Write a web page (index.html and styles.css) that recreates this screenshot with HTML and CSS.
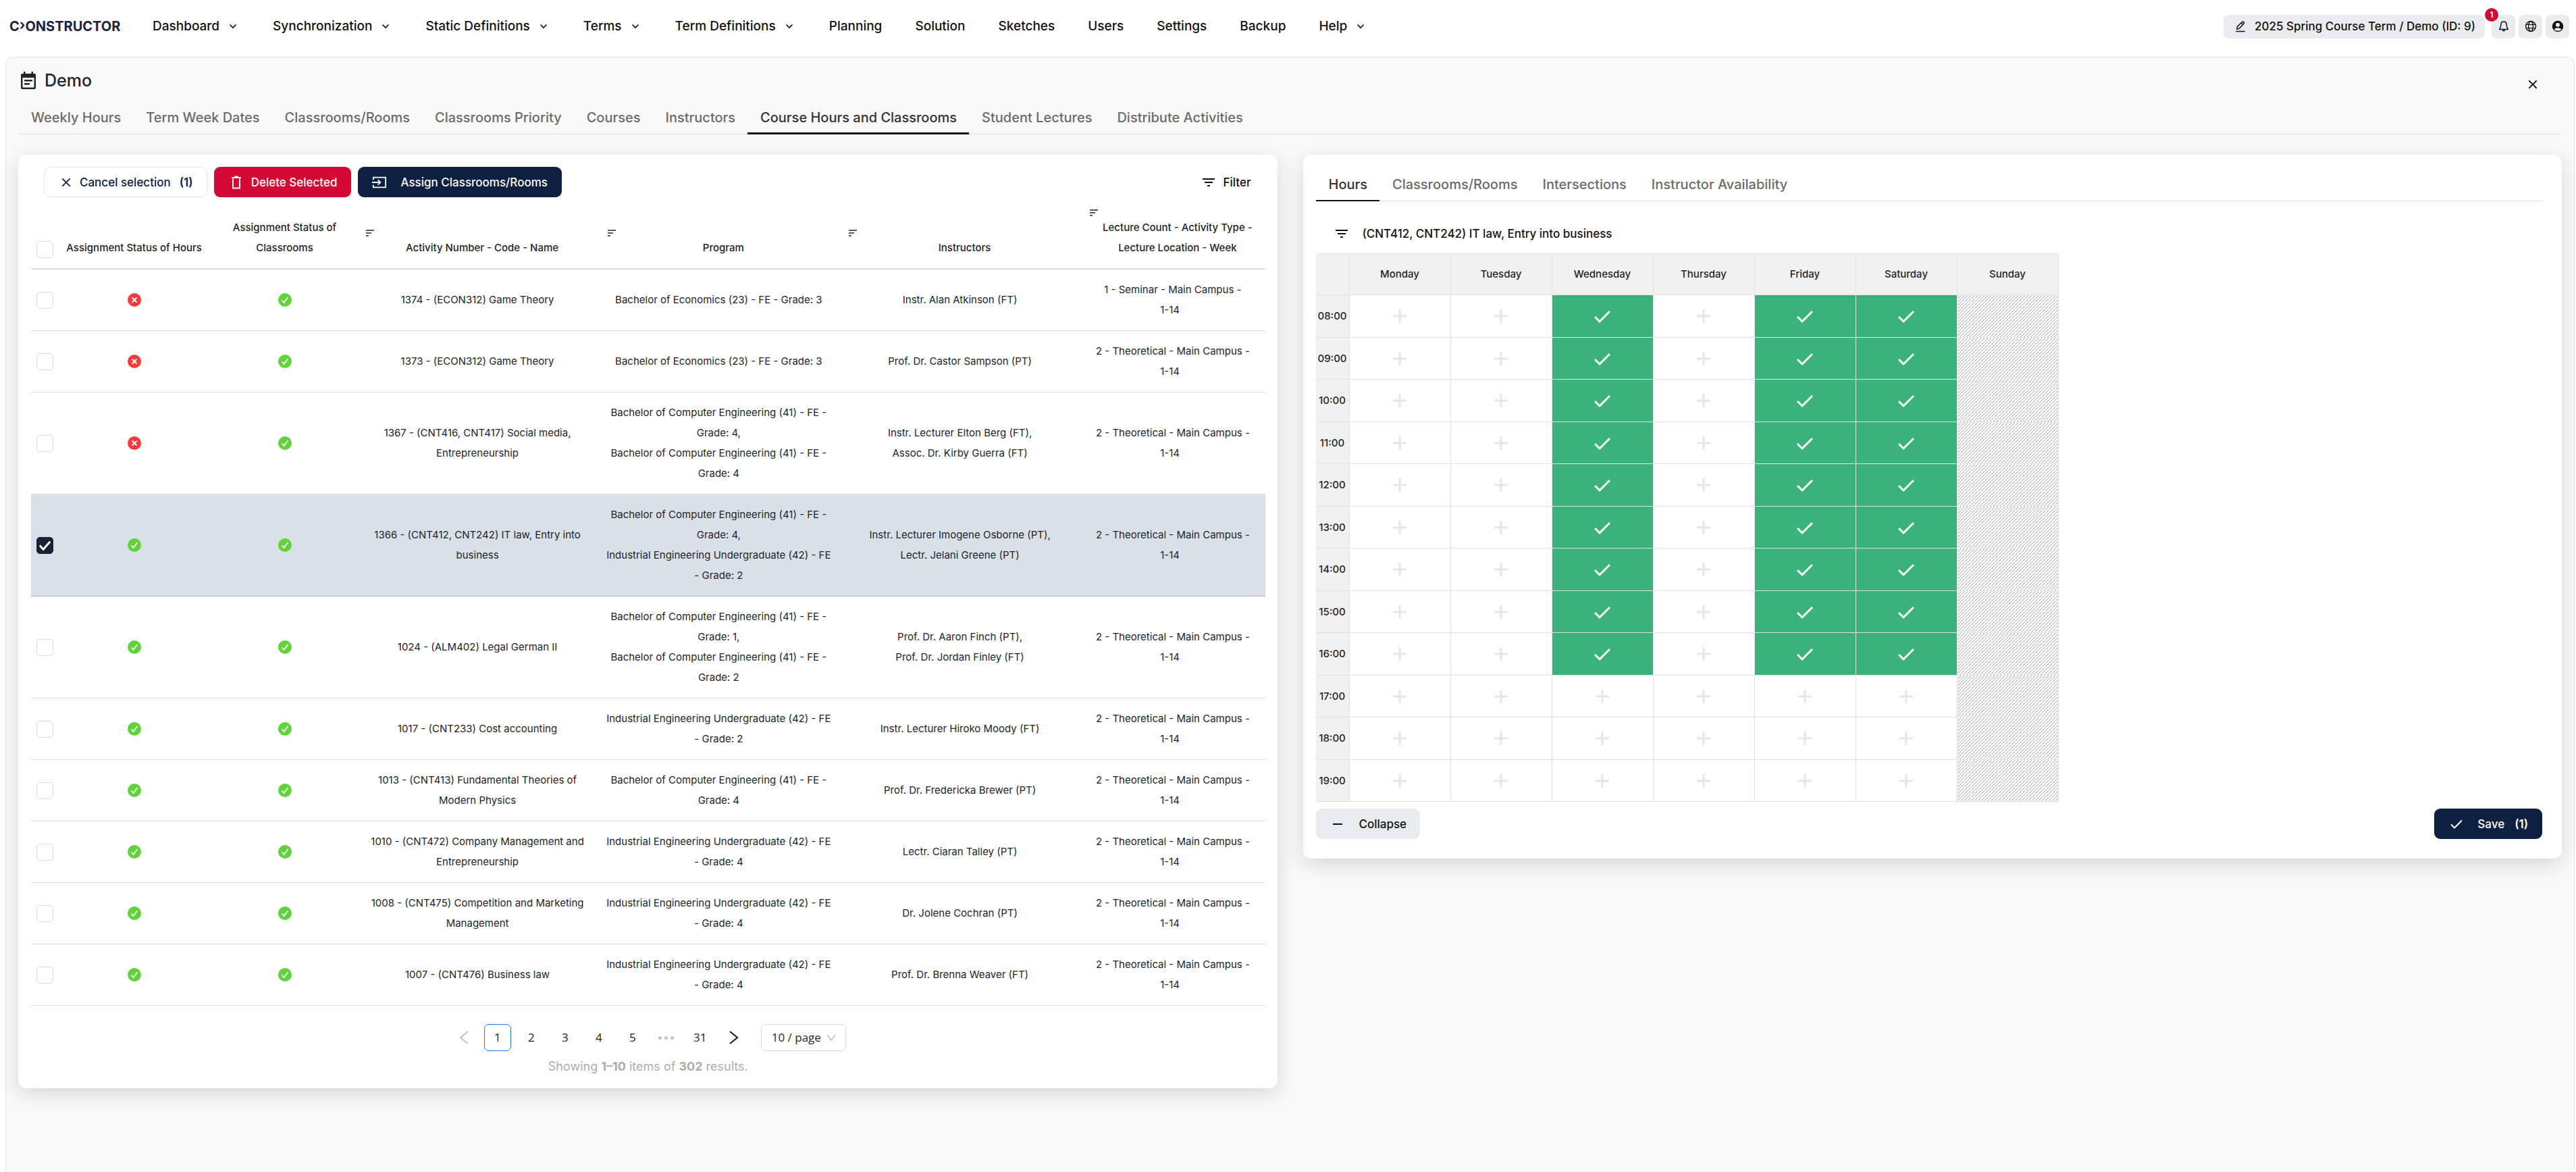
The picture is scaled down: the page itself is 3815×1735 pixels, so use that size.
FILE: index.html
```html
<!DOCTYPE html>
<html lang="en">
<head>
<meta charset="utf-8">
<title>Constructor – Course Hours and Classrooms</title>
<link rel="stylesheet" href="styles.css">
</head>
<body>
<svg class="sprite" aria-hidden="true">
  <symbol id="i-chevron" viewBox="0 0 20 20"><path d="M5.500 7.500 10 12l4.500-4.500" fill="none" stroke="currentColor" stroke-width="1.700"/></symbol>
  <symbol id="i-edit" viewBox="0 0 24 24"><path d="M3 22h18M5 17.500l1-5L15.500 3q1.500-1 3 .500t.500 3L9.500 16.500zM13.500 5l3.500 3.500" fill="none" stroke="currentColor" stroke-width="2"/></symbol>
  <symbol id="i-bell" viewBox="0 0 24 24"><path d="M12 2.500c-3.500 0-5.500 2.500-5.500 6 0 5-1 6.500-3 9.500h17c-2-3-3-4.500-3-9.500 0-3.500-2-6-5.500-6z" fill="none" stroke="currentColor" stroke-width="2" stroke-linejoin="round"/><path d="M9 19h6a3 3 0 0 1-6 0z" fill="currentColor"/></symbol>
  <symbol id="i-globe" viewBox="0 0 24 24"><g fill="none" stroke="currentColor" stroke-width="1.800"><circle cx="12" cy="12" r="10"/><ellipse cx="12" cy="12" rx="4.500" ry="10"/><path d="M2.500 8.500h19M2.500 15.500h19"/></g></symbol>
  <symbol id="i-user" viewBox="0 0 24 24"><path fill="currentColor" fill-rule="evenodd" d="M12 1a11 11 0 1 0 0 22 11 11 0 0 0 0-22zm0 4a4 4 0 1 1 0 8 4 4 0 0 1 0-8zm0 10c4 0 6.500 1.500 7 3-3 4-11 4-14 0 .500-1.500 3-3 7-3z"/></symbol>
  <symbol id="i-calendar" viewBox="0 0 24 26"><path fill="currentColor" fill-rule="evenodd" d="M5 0h2.500v3h9V0H19v3h2q2 0 2 2v19q0 2-2 2H3q-2 0-2-2V5q0-2 2-2h2zM3.500 9v14.500h17V9zM6 12h12v2.500H6zm0 5h8v2.500H6z"/></symbol>
  <symbol id="i-close" viewBox="0 0 16 16"><path d="m1.500 1.500 13 13m0-13-13 13" fill="none" stroke="currentColor" stroke-width="2"/></symbol>
  <symbol id="i-trash" viewBox="0 0 16 20"><path d="M1 3h14M5.500 1.500h5M3 4.500v14h10v-14" fill="none" stroke="currentColor" stroke-width="2"/></symbol>
  <symbol id="i-enter" viewBox="0 0 24 20"><path d="M2 6V2h20v16H2v-4M0 10h13M9.500 6l4 4-4 4" fill="none" stroke="currentColor" stroke-width="2"/></symbol>
  <symbol id="i-filter" viewBox="0 0 18 14"><path d="M0 2h18M3 7h12M7 12h4" fill="none" stroke="currentColor" stroke-width="2"/></symbol>
  <symbol id="i-sort" viewBox="0 0 12 10"><path d="M0 1h12M0 5h8M0 9h4" fill="none" stroke="currentColor" stroke-width="1.500"/></symbol>
  <symbol id="i-ok" viewBox="0 0 20 20"><circle cx="10" cy="10" r="10" fill="#5fd33a"/><path d="m5.500 10.500 3 3.500 6-8" fill="none" stroke="#fff" stroke-width="1.800"/></symbol>
  <symbol id="i-no" viewBox="0 0 20 20"><circle cx="10" cy="10" r="10" fill="#fd3838"/><path d="m6.500 6.500 7 7m0-7-7 7" fill="none" stroke="#fff" stroke-width="2"/></symbol>
  <symbol id="i-minus" viewBox="0 0 16 16"><path d="M1 8h14" stroke="currentColor" stroke-width="2"/></symbol>
  <symbol id="i-check" viewBox="0 0 18 14"><path d="m1 7.500 5 5L17 1.500" fill="none" stroke="currentColor" stroke-width="2"/></symbol>
  <symbol id="i-left" viewBox="0 0 14 20"><path d="M13 1 2 10l11 9" fill="none" stroke="currentColor" stroke-width="1.800"/></symbol>
  <symbol id="i-right" viewBox="0 0 14 20"><path d="m1 1 11 9-11 9" fill="none" stroke="currentColor" stroke-width="2.200"/></symbol>
</svg>

<header class="topbar">
  <a class="logo" href="#">C<span class="logo-mark">›</span>ONSTRUCTOR</a>
  <nav class="menu" aria-label="Main">
    <a href="#">Dashboard<svg class="chevron"><use href="#i-chevron"/></svg></a>
    <a href="#">Synchronization<svg class="chevron"><use href="#i-chevron"/></svg></a>
    <a href="#">Static Definitions<svg class="chevron"><use href="#i-chevron"/></svg></a>
    <a href="#">Terms<svg class="chevron"><use href="#i-chevron"/></svg></a>
    <a href="#">Term Definitions<svg class="chevron"><use href="#i-chevron"/></svg></a>
    <a href="#">Planning</a>
    <a href="#">Solution</a>
    <a href="#">Sketches</a>
    <a href="#">Users</a>
    <a href="#">Settings</a>
    <a href="#">Backup</a>
    <a href="#">Help<svg class="chevron"><use href="#i-chevron"/></svg></a>
  </nav>
  <div class="tools">
    <button class="term" type="button"><svg class="icon-18"><use href="#i-edit"/></svg>2025 Spring Course Term / Demo (ID: 9)</button>
    <button class="tool" type="button" aria-label="Notifications"><svg class="icon-18"><use href="#i-bell"/></svg><span class="badge">1</span></button>
    <button class="tool" type="button" aria-label="Language"><svg class="icon-18"><use href="#i-globe"/></svg></button>
    <button class="tool" type="button" aria-label="Account"><svg class="icon-18"><use href="#i-user"/></svg></button>
  </div>
</header>

<main class="page">
  <div class="page-head">
    <svg class="page-icon"><use href="#i-calendar"/></svg>
    <h1>Demo</h1>
    <button class="close" type="button" aria-label="Close"><svg class="icon-14"><use href="#i-close"/></svg></button>
  </div>
  <nav class="tabs" aria-label="Sections">
    <a href="#">Weekly Hours</a>
    <a href="#">Term Week Dates</a>
    <a href="#">Classrooms/Rooms</a>
    <a href="#">Classrooms Priority</a>
    <a href="#">Courses</a>
    <a href="#">Instructors</a>
    <a href="#" class="active" aria-current="page">Course Hours and Classrooms</a>
    <a href="#">Student Lectures</a>
    <a href="#">Distribute Activities</a>
  </nav>

  <div class="columns">
    <section class="card list">
      <div class="toolbar">
        <button class="btn outline" type="button"><svg class="icon-14"><use href="#i-close"/></svg>Cancel selection <b>(1)</b></button>
        <button class="btn danger" type="button"><svg class="icon-trash"><use href="#i-trash"/></svg>Delete Selected</button>
        <button class="btn primary assign" type="button"><svg class="icon-enter"><use href="#i-enter"/></svg>Assign Classrooms/Rooms</button>
        <button class="filter" type="button"><svg class="icon-filter"><use href="#i-filter"/></svg>Filter</button>
      </div>
      <table class="activities">
        <colgroup><col class="c-check"><col class="c-hours"><col class="c-rooms"><col class="c-wide"><col class="c-wide"><col class="c-wide"><col class="c-lecture"></colgroup>
        <thead>
          <tr>
            <th><input type="checkbox" aria-label="Select all"></th>
            <th>Assignment Status of Hours</th>
            <th>Assignment Status of Classrooms</th>
            <th class="sortable"><svg class="sort"><use href="#i-sort"/></svg>Activity Number - Code - Name</th>
            <th class="sortable"><svg class="sort"><use href="#i-sort"/></svg>Program</th>
            <th class="sortable"><svg class="sort"><use href="#i-sort"/></svg>Instructors</th>
            <th class="sortable"><svg class="sort"><use href="#i-sort"/></svg>Lecture Count - Activity Type - Lecture Location - Week</th>
          </tr>
        </thead>
        <tbody>
          <tr><td><input type="checkbox" aria-label="Select 1374"></td><td><svg class="status"><use href="#i-no"/></svg></td><td><svg class="status"><use href="#i-ok"/></svg></td><td>1374 - (ECON312) Game Theory</td><td>Bachelor of Economics (23) - FE - Grade: 3</td><td>Instr. Alan Atkinson (FT)</td><td>1 - Seminar - Main Campus -<br>1-14&nbsp;&nbsp;</td></tr>
          <tr><td><input type="checkbox" aria-label="Select 1373"></td><td><svg class="status"><use href="#i-no"/></svg></td><td><svg class="status"><use href="#i-ok"/></svg></td><td>1373 - (ECON312) Game Theory</td><td>Bachelor of Economics (23) - FE - Grade: 3</td><td>Prof. Dr. Castor Sampson (PT)</td><td>2 - Theoretical - Main Campus -<br>1-14&nbsp;&nbsp;</td></tr>
          <tr><td><input type="checkbox" aria-label="Select 1367"></td><td><svg class="status"><use href="#i-no"/></svg></td><td><svg class="status"><use href="#i-ok"/></svg></td><td>1367 - (CNT416, CNT417) Social media, Entrepreneurship</td><td>Bachelor of Computer Engineering (41) - FE - Grade: 4,<br>Bachelor of Computer Engineering (41) - FE - Grade: 4</td><td>Instr. Lecturer Elton Berg (FT),<br>Assoc. Dr. Kirby Guerra (FT)</td><td>2 - Theoretical - Main Campus -<br>1-14&nbsp;&nbsp;</td></tr>
          <tr class="selected"><td><input type="checkbox" aria-label="Select 1366" checked></td><td><svg class="status"><use href="#i-ok"/></svg></td><td><svg class="status"><use href="#i-ok"/></svg></td><td>1366 - (CNT412, CNT242) IT law, Entry into business</td><td>Bachelor of Computer Engineering (41) - FE - Grade: 4,<br>Industrial Engineering Undergraduate (42) - FE - Grade: 2</td><td>Instr. Lecturer Imogene Osborne (PT),<br>Lectr. Jelani Greene (PT)</td><td>2 - Theoretical - Main Campus -<br>1-14&nbsp;&nbsp;</td></tr>
          <tr><td><input type="checkbox" aria-label="Select 1024"></td><td><svg class="status"><use href="#i-ok"/></svg></td><td><svg class="status"><use href="#i-ok"/></svg></td><td>1024 - (ALM402) Legal German II</td><td>Bachelor of Computer Engineering (41) - FE - Grade: 1,<br>Bachelor of Computer Engineering (41) - FE - Grade: 2</td><td>Prof. Dr. Aaron Finch (PT),<br>Prof. Dr. Jordan Finley (FT)</td><td>2 - Theoretical - Main Campus -<br>1-14&nbsp;&nbsp;</td></tr>
          <tr><td><input type="checkbox" aria-label="Select 1017"></td><td><svg class="status"><use href="#i-ok"/></svg></td><td><svg class="status"><use href="#i-ok"/></svg></td><td>1017 - (CNT233) Cost accounting</td><td>Industrial Engineering Undergraduate (42) - FE - Grade: 2</td><td>Instr. Lecturer Hiroko Moody (FT)</td><td>2 - Theoretical - Main Campus -<br>1-14&nbsp;&nbsp;</td></tr>
          <tr><td><input type="checkbox" aria-label="Select 1013"></td><td><svg class="status"><use href="#i-ok"/></svg></td><td><svg class="status"><use href="#i-ok"/></svg></td><td>1013 - (CNT413) Fundamental Theories of Modern Physics</td><td>Bachelor of Computer Engineering (41) - FE - Grade: 4</td><td>Prof. Dr. Fredericka Brewer (PT)</td><td>2 - Theoretical - Main Campus -<br>1-14&nbsp;&nbsp;</td></tr>
          <tr><td><input type="checkbox" aria-label="Select 1010"></td><td><svg class="status"><use href="#i-ok"/></svg></td><td><svg class="status"><use href="#i-ok"/></svg></td><td>1010 - (CNT472) Company Management and Entrepreneurship</td><td>Industrial Engineering Undergraduate (42) - FE - Grade: 4</td><td>Lectr. Ciaran Talley (PT)</td><td>2 - Theoretical - Main Campus -<br>1-14&nbsp;&nbsp;</td></tr>
          <tr><td><input type="checkbox" aria-label="Select 1008"></td><td><svg class="status"><use href="#i-ok"/></svg></td><td><svg class="status"><use href="#i-ok"/></svg></td><td>1008 - (CNT475) Competition and Marketing Management</td><td>Industrial Engineering Undergraduate (42) - FE - Grade: 4</td><td>Dr. Jolene Cochran (PT)</td><td>2 - Theoretical - Main Campus -<br>1-14&nbsp;&nbsp;</td></tr>
          <tr><td><input type="checkbox" aria-label="Select 1007"></td><td><svg class="status"><use href="#i-ok"/></svg></td><td><svg class="status"><use href="#i-ok"/></svg></td><td>1007 - (CNT476) Business law</td><td>Industrial Engineering Undergraduate (42) - FE - Grade: 4</td><td>Prof. Dr. Brenna Weaver (FT)</td><td>2 - Theoretical - Main Campus -<br>1-14&nbsp;&nbsp;</td></tr>
        </tbody>
      </table>
      <nav class="pager" aria-label="Pages">
        <button type="button" class="muted" aria-label="Previous page" disabled><svg class="arrow"><use href="#i-left"/></svg></button>
        <button type="button" class="current" aria-current="page">1</button>
        <button type="button">2</button>
        <button type="button">3</button>
        <button type="button">4</button>
        <button type="button">5</button>
        <span class="dots"><i></i><i></i><i></i></span>
        <button type="button">31</button>
        <button type="button" aria-label="Next page"><svg class="arrow"><use href="#i-right"/></svg></button>
        <select aria-label="Page size"><option>10 / page</option><option>20 / page</option></select>
      </nav>
      <p class="summary">Showing <b>1–10</b> items of <b>302</b> results.</p>
    </section>

    <section class="card detail">
      <nav class="tabs inner" aria-label="Details">
        <a href="#" class="active" aria-current="page">Hours</a>
        <a href="#">Classrooms/Rooms</a>
        <a href="#">Intersections</a>
        <a href="#">Instructor Availability</a>
      </nav>
      <div class="course"><svg class="icon-filter"><use href="#i-filter"/></svg><h2>(CNT412, CNT242) IT law, Entry into business</h2></div>
      <table class="week">
        <thead><tr><th></th><th>Monday</th><th>Tuesday</th><th>Wednesday</th><th>Thursday</th><th>Friday</th><th>Saturday</th><th>Sunday</th></tr></thead>
        <tbody>
          <tr><th>08:00</th><td><input type="checkbox" aria-label="Monday 08:00"></td><td><input type="checkbox" aria-label="Tuesday 08:00"></td><td><input type="checkbox" aria-label="Wednesday 08:00" checked></td><td><input type="checkbox" aria-label="Thursday 08:00"></td><td><input type="checkbox" aria-label="Friday 08:00" checked></td><td><input type="checkbox" aria-label="Saturday 08:00" checked></td><td class="off"></td></tr>
          <tr><th>09:00</th><td><input type="checkbox" aria-label="Monday 09:00"></td><td><input type="checkbox" aria-label="Tuesday 09:00"></td><td><input type="checkbox" aria-label="Wednesday 09:00" checked></td><td><input type="checkbox" aria-label="Thursday 09:00"></td><td><input type="checkbox" aria-label="Friday 09:00" checked></td><td><input type="checkbox" aria-label="Saturday 09:00" checked></td><td class="off"></td></tr>
          <tr><th>10:00</th><td><input type="checkbox" aria-label="Monday 10:00"></td><td><input type="checkbox" aria-label="Tuesday 10:00"></td><td><input type="checkbox" aria-label="Wednesday 10:00" checked></td><td><input type="checkbox" aria-label="Thursday 10:00"></td><td><input type="checkbox" aria-label="Friday 10:00" checked></td><td><input type="checkbox" aria-label="Saturday 10:00" checked></td><td class="off"></td></tr>
          <tr><th>11:00</th><td><input type="checkbox" aria-label="Monday 11:00"></td><td><input type="checkbox" aria-label="Tuesday 11:00"></td><td><input type="checkbox" aria-label="Wednesday 11:00" checked></td><td><input type="checkbox" aria-label="Thursday 11:00"></td><td><input type="checkbox" aria-label="Friday 11:00" checked></td><td><input type="checkbox" aria-label="Saturday 11:00" checked></td><td class="off"></td></tr>
          <tr><th>12:00</th><td><input type="checkbox" aria-label="Monday 12:00"></td><td><input type="checkbox" aria-label="Tuesday 12:00"></td><td><input type="checkbox" aria-label="Wednesday 12:00" checked></td><td><input type="checkbox" aria-label="Thursday 12:00"></td><td><input type="checkbox" aria-label="Friday 12:00" checked></td><td><input type="checkbox" aria-label="Saturday 12:00" checked></td><td class="off"></td></tr>
          <tr><th>13:00</th><td><input type="checkbox" aria-label="Monday 13:00"></td><td><input type="checkbox" aria-label="Tuesday 13:00"></td><td><input type="checkbox" aria-label="Wednesday 13:00" checked></td><td><input type="checkbox" aria-label="Thursday 13:00"></td><td><input type="checkbox" aria-label="Friday 13:00" checked></td><td><input type="checkbox" aria-label="Saturday 13:00" checked></td><td class="off"></td></tr>
          <tr><th>14:00</th><td><input type="checkbox" aria-label="Monday 14:00"></td><td><input type="checkbox" aria-label="Tuesday 14:00"></td><td><input type="checkbox" aria-label="Wednesday 14:00" checked></td><td><input type="checkbox" aria-label="Thursday 14:00"></td><td><input type="checkbox" aria-label="Friday 14:00" checked></td><td><input type="checkbox" aria-label="Saturday 14:00" checked></td><td class="off"></td></tr>
          <tr><th>15:00</th><td><input type="checkbox" aria-label="Monday 15:00"></td><td><input type="checkbox" aria-label="Tuesday 15:00"></td><td><input type="checkbox" aria-label="Wednesday 15:00" checked></td><td><input type="checkbox" aria-label="Thursday 15:00"></td><td><input type="checkbox" aria-label="Friday 15:00" checked></td><td><input type="checkbox" aria-label="Saturday 15:00" checked></td><td class="off"></td></tr>
          <tr><th>16:00</th><td><input type="checkbox" aria-label="Monday 16:00"></td><td><input type="checkbox" aria-label="Tuesday 16:00"></td><td><input type="checkbox" aria-label="Wednesday 16:00" checked></td><td><input type="checkbox" aria-label="Thursday 16:00"></td><td><input type="checkbox" aria-label="Friday 16:00" checked></td><td><input type="checkbox" aria-label="Saturday 16:00" checked></td><td class="off"></td></tr>
          <tr><th>17:00</th><td><input type="checkbox" aria-label="Monday 17:00"></td><td><input type="checkbox" aria-label="Tuesday 17:00"></td><td><input type="checkbox" aria-label="Wednesday 17:00"></td><td><input type="checkbox" aria-label="Thursday 17:00"></td><td><input type="checkbox" aria-label="Friday 17:00"></td><td><input type="checkbox" aria-label="Saturday 17:00"></td><td class="off"></td></tr>
          <tr><th>18:00</th><td><input type="checkbox" aria-label="Monday 18:00"></td><td><input type="checkbox" aria-label="Tuesday 18:00"></td><td><input type="checkbox" aria-label="Wednesday 18:00"></td><td><input type="checkbox" aria-label="Thursday 18:00"></td><td><input type="checkbox" aria-label="Friday 18:00"></td><td><input type="checkbox" aria-label="Saturday 18:00"></td><td class="off"></td></tr>
          <tr><th>19:00</th><td><input type="checkbox" aria-label="Monday 19:00"></td><td><input type="checkbox" aria-label="Tuesday 19:00"></td><td><input type="checkbox" aria-label="Wednesday 19:00"></td><td><input type="checkbox" aria-label="Thursday 19:00"></td><td><input type="checkbox" aria-label="Friday 19:00"></td><td><input type="checkbox" aria-label="Saturday 19:00"></td><td class="off"></td></tr>
        </tbody>
      </table>
      <div class="actions">
        <button class="btn soft" type="button"><svg class="icon-16"><use href="#i-minus"/></svg>Collapse</button>
        <button class="btn primary save" type="button"><svg class="icon-check"><use href="#i-check"/></svg>Save <b>(1)</b></button>
      </div>
    </section>
  </div>
</main>
</body>
</html>
```
FILE: styles.css
```css
* { box-sizing: border-box; }

body {
  margin: 0;
  min-height: 100vh;
  display: flex;
  flex-direction: column;
  background: #fff;
  color: #212529;
  font: 500 20px/30px Inter, "Liberation Sans", sans-serif;
}

a { color: inherit; text-decoration: none; }
button, input, select { font: inherit; color: inherit; margin: 0; }
button { border: 0; background: none; padding: 0; display: flex; align-items: center; justify-content: center; cursor: pointer; }
svg { display: block; flex: none; }
.sprite { position: absolute; width: 0; height: 0; }

.icon-14 { width: 14px; height: 14px; }
.icon-16 { width: 16px; height: 16px; }
.icon-18 { width: 18px; height: 18px; }
.icon-filter { width: 18px; height: 14px; }
.icon-trash { width: 16px; height: 20px; }
.icon-enter { width: 22px; height: 20px; }
.icon-check { width: 18px; height: 14px; }

/* Top bar */
.topbar { display: flex; align-items: center; height: 84px; padding: 0 10px 6px 14px; }
.logo { display: flex; width: 212px; font-weight: 700; font-size: 20px; color: #1c2340; }
.logo-mark { line-height: 26px; }
.menu { display: flex; gap: 49px; font-size: 19px; color: #111; }
.menu a { display: flex; align-items: center; gap: 10px; }
.chevron { width: 20px; height: 20px; }
.tools { display: flex; align-items: center; gap: 5px; margin-left: auto; color: #111; }
.term { gap: 12px; height: 35px; padding: 0 14px 0 16px; margin-right: 5px; border-radius: 8px; background: #e8ecec; font-size: 17px; }
.tool { position: relative; width: 35px; height: 35px; border-radius: 8px; background: #e8ecec; }
.badge { position: absolute; top: -10px; left: -10px; width: 20px; height: 20px; border-radius: 10px; background: #d50a33; color: #fff; font-size: 12px; line-height: 20px; font-weight: 600; }

/* Page frame */
.page { flex: 1; margin: 0 2px 0 8px; padding: 0 18px 100px; border: 1px solid #e4e5e7; border-bottom: 0; border-radius: 12px 12px 0 0; background: #f9f9f9; }
.page-head { display: flex; align-items: center; gap: 12px; height: 68px; padding-left: 3px; }
.page-icon { width: 24px; height: 26px; }
h1 { margin: 0; font-size: 25px; font-weight: 500; }
.close { width: 30px; height: 30px; margin: 12px 28px 0 auto; color: #000; }

.tabs { display: flex; border-bottom: 1px solid #dcdee4; color: #6b6b6b; }
.tabs a { height: 46px; padding: 6px 18px 10px 19px; margin-bottom: -1px; border-bottom: 3px solid transparent; }
.tabs .active { color: #333; border-bottom-color: #15120e; }
.tabs.inner a { height: 50px; padding-top: 10px; border-bottom-width: 2px; }

.columns { display: grid; grid-template-columns: 1fr 1fr; gap: 38px; align-items: start; margin-top: 30px; }
.card { border-radius: 12px; background: #fff; box-shadow: 0 8px 30px rgba(0, 0, 0, .14); }
.list { padding: 18px 18px 17px 19px; }
.detail { padding: 19px 29px 29px 19px; }

/* Buttons */
.btn { height: 45px; border-radius: 9px; font-size: 17px; }
.btn b { font-weight: 600; }
.outline { gap: 13px; padding: 0 20px 0 25px; border: 1px solid #e6e7e8; background: #fff; color: #0d2041; }
.danger { gap: 14px; padding: 0 21px 0 25px; background: #d50a33; color: #fff; }
.primary { background: #0d2041; color: #fff; }
.assign { gap: 20px; padding: 0 21px; }
.soft { gap: 24px; padding: 0 20px 0 24px; background: #e8ecec; color: #111; }
.save { gap: 22px; padding: 0 21px 0 24px; }
.save b { margin-left: -7px; }
.toolbar { display: flex; align-items: center; gap: 10px; padding-left: 19px; }
.filter { gap: 12px; margin-left: auto; padding-right: 21px; font-size: 17px; color: #111; }

/* Activity list */
.activities { width: 100%; table-layout: fixed; border-collapse: separate; border-spacing: 0; font-size: 15px; font-weight: 400; margin-top: 15px; }
.c-check { width: 2%; }
.c-hours { width: 12.7%; }
.c-rooms { width: 11.7%; }
.c-wide { width: 19.55%; }
.c-lecture { width: 14.95%; }
.activities th { padding: 0 10px 15px; border-bottom: 2px solid #dae0e8; font-weight: 500; vertical-align: bottom; }
.activities td { padding: 15px 10px; border-bottom: 1px solid #dcdfe1; text-align: center; }
.activities th:first-child, .activities td:first-child { padding-left: 8px; padding-right: 0; text-align: left; }
.activities .sortable { padding-left: 14px; padding-right: 0; }
.sort { width: 12px; height: 10px; margin: 3px 0 2px; }
.status { width: 20px; height: 20px; margin: 0 auto; }
.activities input { display: block; appearance: none; width: 25px; height: 25px; border: 1px solid #d9dcdf; border-radius: 5px; background: #fff; }
.activities input:checked { border-color: #1a2038; background: #1a2038 url("data:image/svg+xml,%3Csvg xmlns='http://www.w3.org/2000/svg' viewBox='0 0 24 24'%3E%3Cpath d='m4 12 5.500 6L20 6' fill='none' stroke='%23fff' stroke-width='3'/%3E%3C/svg%3E") center / 23px; }
.selected td { background: #dae0e8; border-bottom-color: #aeb4ba; }

/* Pager */
.pager { display: flex; justify-content: center; gap: 10px; margin-top: 27px; font-family: "Open Sans", "Noto Sans", sans-serif; font-weight: 400; font-size: 17px; color: #1f1f1f; }
.pager button { width: 40px; height: 40px; border-radius: 7px; }
.pager .muted { color: #bfbfbf; }
.pager .current { border: 1px solid #1677ff; }
.arrow { width: 14px; height: 20px; }
.dots { display: flex; align-items: center; justify-content: center; gap: 4px; width: 40px; }
.dots i { width: 5px; height: 5px; border-radius: 50%; background: #c3c3c3; }
.pager select { appearance: none; width: 126px; height: 40px; margin-left: 10px; padding: 0 15px; border: 1px solid #d9d9d9; border-radius: 7px; background: #fff url("data:image/svg+xml,%3Csvg xmlns='http://www.w3.org/2000/svg' viewBox='0 0 14 10'%3E%3Cpath d='m1 1 6 8 6-8' fill='none' stroke='%23bfbfbf' stroke-width='1.500'/%3E%3C/svg%3E") right 14px center / 14px no-repeat; }
.summary { margin: 8px 0 0; text-align: center; font-size: 18px; font-weight: 400; color: #aeaca9; }
.summary b { font-weight: 700; }

/* Weekly grid */
.course { display: flex; align-items: center; gap: 22px; height: 77px; padding: 19px 0 0 29px; color: #111; }
h2 { margin: 0; font-size: 17px; font-weight: 500; }
.week { width: 1100px; table-layout: fixed; border-collapse: separate; border-spacing: 0; font-size: 15px; }
.week th, .week td { height: 62px; padding: 0; border: 0 solid #dee1e5; border-width: 0 1px 1px 0; }
.week tbody tr:nth-child(odd) > * { height: 63px; }
.week thead th { border-top-width: 1px; }
.week th { width: 150px; background: #f1f1f1; font-weight: 500; }
.week th:first-child { width: 50px; }
.week input { display: block; appearance: none; width: 100%; height: 100%; background: url("data:image/svg+xml,%3Csvg xmlns='http://www.w3.org/2000/svg' viewBox='0 0 24 24'%3E%3Cpath d='M12 2v20M2 12h20' stroke='%23e6e6e6' stroke-width='3'/%3E%3C/svg%3E") center / 24px no-repeat; }
.week input:checked { background-color: #3ab27c; background-image: url("data:image/svg+xml,%3Csvg xmlns='http://www.w3.org/2000/svg' viewBox='0 0 24 24'%3E%3Cpath d='m1 13 7 7L23 5' fill='none' stroke='%23fff' stroke-width='3'/%3E%3C/svg%3E"); }
.off { background: linear-gradient(135deg, #c8c8c8 10%, #fff 10%, #fff 40%, #c8c8c8 50%, #c8c8c8 60%, #fff 70%, #fff 90%, #c8c8c8) 0 0 / 5px 5px; }
.actions { display: flex; justify-content: space-between; margin-top: 10px; }
```
